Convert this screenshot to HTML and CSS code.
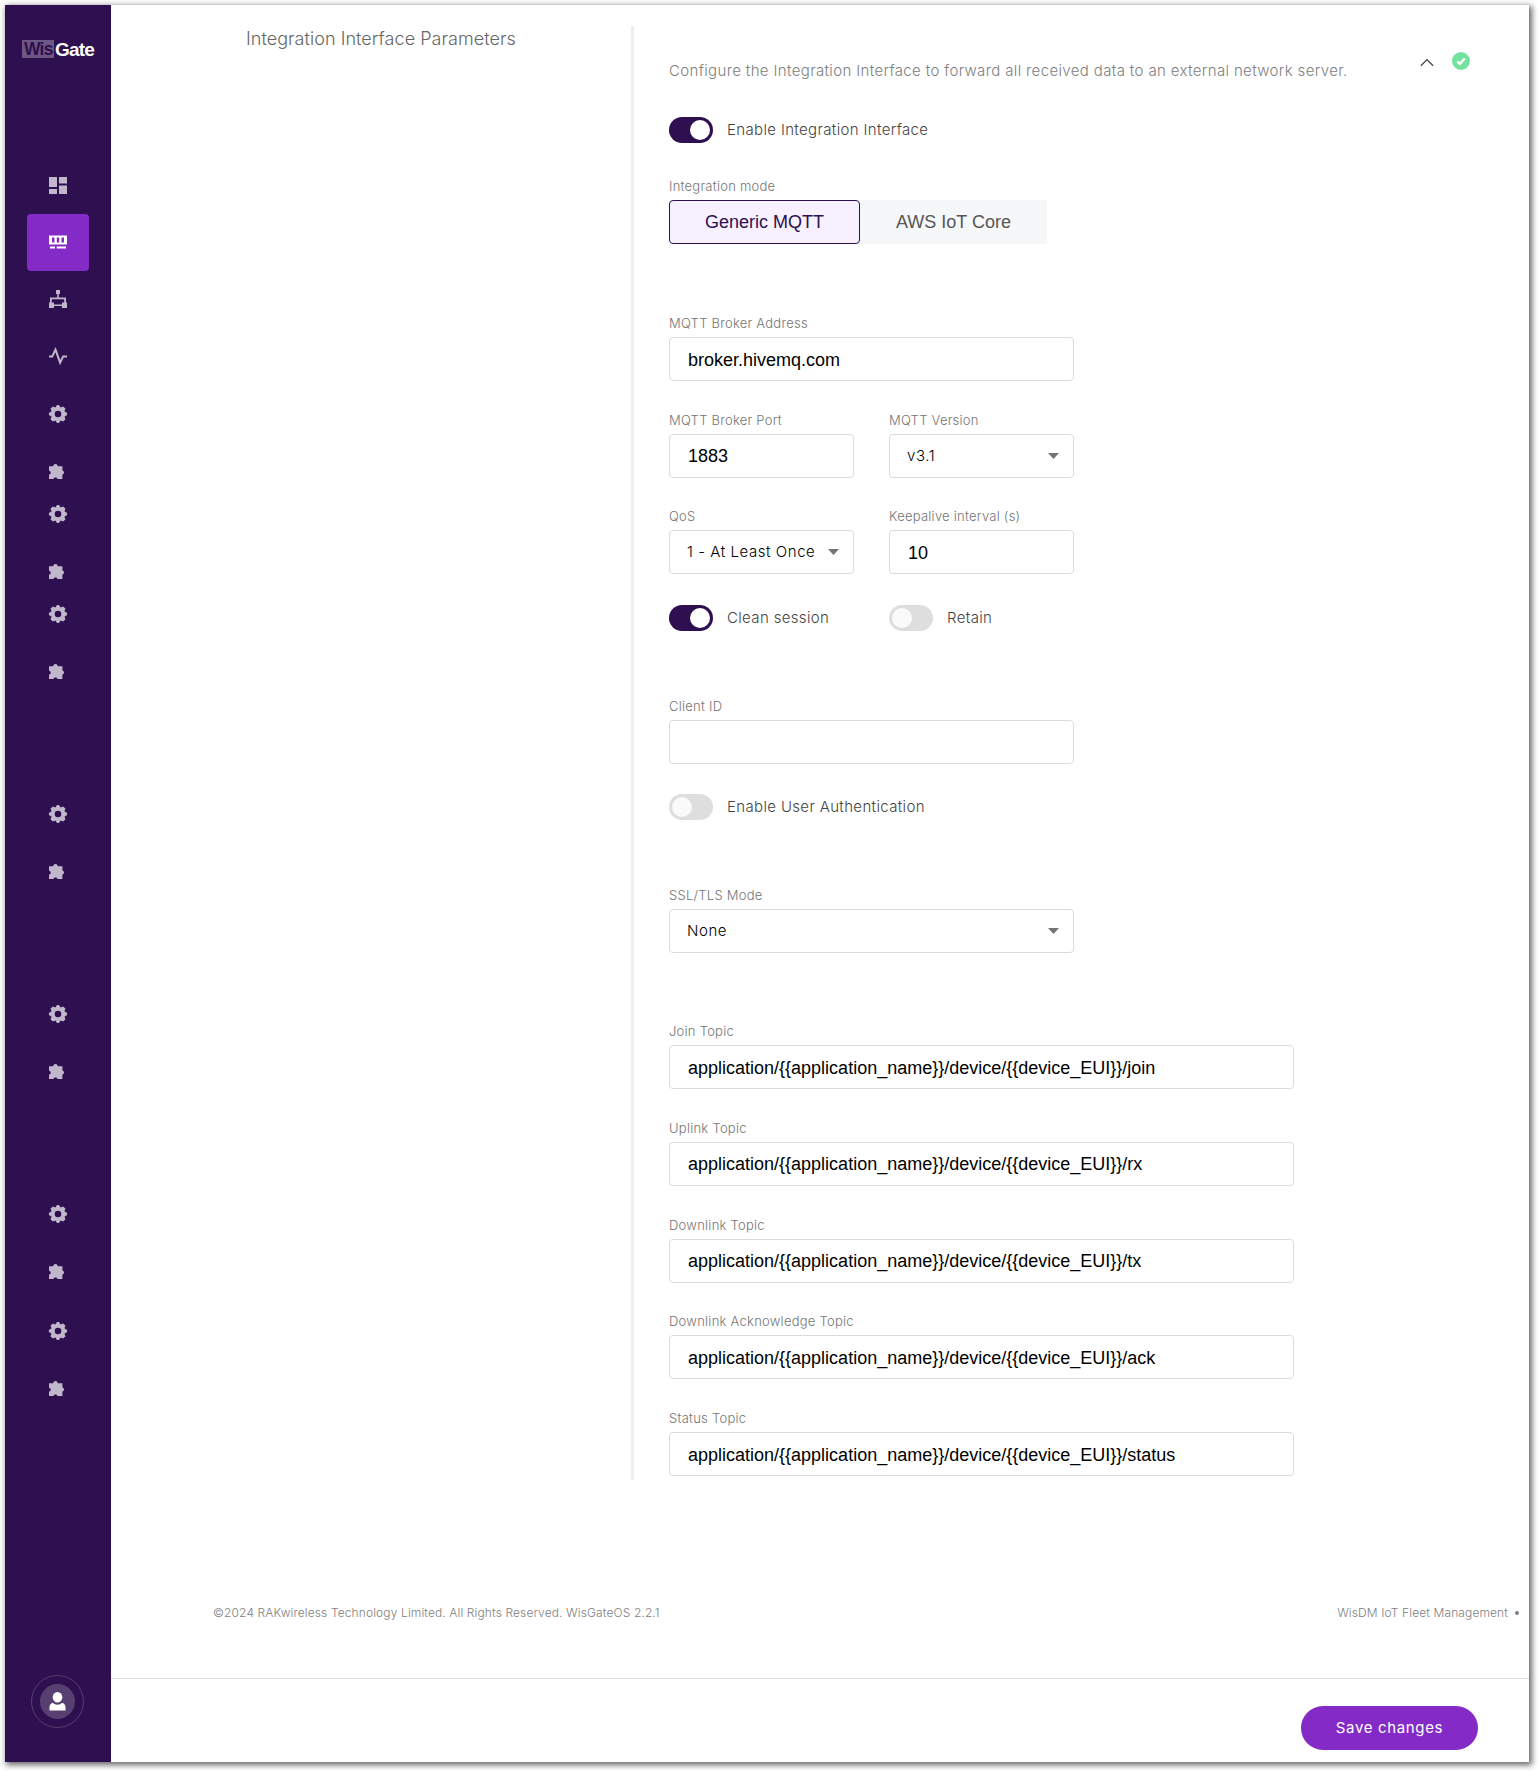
FILE: index.html
```html
<!DOCTYPE html>
<html lang="en">
<head>
<meta charset="utf-8">
<title>WisGate</title>
<link rel="stylesheet" href="styles.css">
</head>
<body>
<svg class="defs" width="0" height="0" aria-hidden="true">
  <symbol id="gear" viewBox="0 0 20 20"><path fill-rule="evenodd" d="M19.100 9v2l-2.700 1.650 1.150 2.550-2.350 2.350-2.550-1.150L11 19.100H9L7.350 16.400 4.800 17.550 2.450 15.200 3.600 12.650.9 11V9l2.700-1.650L2.450 4.800 4.800 2.450 7.350 3.600 9 .9h2l1.650 2.700 2.550-1.150 2.350 2.350-1.150 2.550zM10 6.700a3.300 3.300 0 1 0 0 6.600 3.300 3.300 0 0 0 0-6.600z"/></symbol>
  <symbol id="puzzle" viewBox="0 0 20 20"><path d="M1 4.200h4.300c0-1.500 1-2.200 2.200-2.200s2.200.7 2.200 2.200H14.400v4.300c1.100.2 1.600 1 1.600 1.900s-.5 1.800-1.600 2V17H9.400c-.2-.9-.9-1.400-1.900-1.400s-1.700.5-1.900 1.400H1v-4.400c1.100-.2 1.700-1 1.700-1.900S2.100 9 1 8.800z"/></symbol>
  <symbol id="caret" viewBox="0 0 11 6"><path d="M0 0h11L5.500 6z"/></symbol>
</svg>
<div class="window">
  <nav class="sidebar">
    <div class="logo"><span class="logo-wis">Wis</span><span class="logo-gate">Gate</span></div>
    <a class="nav-item"><svg width="20" height="20" viewBox="0 0 20 20"><path d="M1 1h8v10H1zM11 1h8v6.500h-8zM1 13h8v5H1zM11 9.500h8V18h-8z"/></svg></a>
    <a class="nav-item nav-item-active"><svg width="20" height="20" viewBox="0 0 20 20"><path fill-rule="evenodd" d="M1 3.500h18v9H1zM4 5.500v5h2.500v-5zM8.800 5.500v5h2.400v-5zM13.500 5.500v5H16v-5zM2 14.500h5v2H2zM8.700 14.500H18v2H8.700z"/></svg></a>
    <a class="nav-item nav-item-raised"><svg width="20" height="20" viewBox="0 0 20 20"><path d="M8 1h4v4h-1.200v3.500H18v5h1V19h-5v-5.500h2.200v-3.200H3.800v3.200H6V19H1v-5.500h1v-5h7.200V5H8z"/><path d="M6 15.500h8v1.500H6z"/></svg></a>
    <a class="nav-item nav-item-raised"><svg width="20" height="20" viewBox="0 0 20 20"><path class="stroke" d="M1 10.500h3.200L7.500 3.600l4.600 13 3-6.100H19"/></svg></a>
    <div class="nav-group"><svg><use href="#gear"/></svg><svg><use href="#puzzle"/></svg></div>
    <div class="nav-group"><svg><use href="#gear"/></svg><svg><use href="#puzzle"/></svg></div>
    <div class="nav-group"><svg><use href="#gear"/></svg><svg><use href="#puzzle"/></svg></div>
    <div class="nav-group nav-group-wide"><svg><use href="#gear"/></svg><svg><use href="#puzzle"/></svg></div>
    <div class="nav-group nav-group-wide"><svg><use href="#gear"/></svg><svg><use href="#puzzle"/></svg></div>
    <div class="nav-group nav-group-wide"><svg><use href="#gear"/></svg><svg><use href="#puzzle"/></svg></div>
    <div class="nav-group nav-group-mid"><svg><use href="#gear"/></svg><svg><use href="#puzzle"/></svg></div>
    <div class="avatar"><span class="avatar-inner"><svg width="17" height="19" viewBox="0 0 17 19"><ellipse cx="8.500" cy="5.300" rx="4.800" ry="5.200"/><path d="M.5 18.500v-3.300c0-2 1.200-3.700 3.200-4.500a6.800 6.800 0 0 0 9.600 0c2 .8 3.200 2.500 3.200 4.500v3.300z"/></svg></span></div>
  </nav>
  <main class="main">
    <div class="content">
      <h1 class="section-title">Integration Interface Parameters</h1>
      <section class="form">
        <header class="form-head">
          <p class="description">Configure the Integration Interface to forward all received data to an external network server.</p>
          <div class="status">
            <svg class="chevron" width="14" height="9" viewBox="0 0 14 9"><path d="M.9 7.800L7 1.600l6.100 6.200"/></svg>
            <svg width="18" height="18" viewBox="0 0 18 18"><circle cx="9" cy="9" r="9" fill="#73e29e"/><path d="M5.300 9.500l2.600 2.400 4.900-5.400" fill="none" stroke="#fff" stroke-width="2.400"/></svg>
          </div>
        </header>
        <div class="switch-row enable-row"><span class="switch switch-on"></span><span>Enable Integration Interface</span></div>
        <div class="field">
          <span class="label">Integration mode</span>
          <div class="segments"><button class="segment segment-active">Generic MQTT</button><button class="segment">AWS IoT Core</button></div>
        </div>
        <div class="field medium broker"><label class="label">MQTT Broker Address</label><input class="input" value="broker.hivemq.com"></div>
        <div class="pair port-row">
          <div class="field"><label class="label">MQTT Broker Port</label><input class="input" value="1883"></div>
          <div class="field"><span class="label">MQTT Version</span><div class="select"><span>v3.1</span><svg class="caret"><use href="#caret"/></svg></div></div>
        </div>
        <div class="pair qos-row">
          <div class="field"><span class="label">QoS</span><div class="select"><span>1 - At Least Once</span><svg class="caret"><use href="#caret"/></svg></div></div>
          <div class="field"><label class="label">Keepalive interval (s)</label><input class="input" value="10"></div>
        </div>
        <div class="pair session-row">
          <div class="switch-row"><span class="switch switch-on"></span><span>Clean session</span></div>
          <div class="switch-row"><span class="switch"></span><span>Retain</span></div>
        </div>
        <div class="field medium client"><label class="label">Client ID</label><input class="input" value=""></div>
        <div class="switch-row auth-row"><span class="switch"></span><span>Enable User Authentication</span></div>
        <div class="field medium client"><span class="label">SSL/TLS Mode</span><div class="select"><span>None</span><svg class="caret"><use href="#caret"/></svg></div></div>
        <div class="topics">
          <div class="field"><label class="label">Join Topic</label><input class="input" value="application/{{application_name}}/device/{{device_EUI}}/join"></div>
          <div class="field"><label class="label">Uplink Topic</label><input class="input" value="application/{{application_name}}/device/{{device_EUI}}/rx"></div>
          <div class="field"><label class="label">Downlink Topic</label><input class="input" value="application/{{application_name}}/device/{{device_EUI}}/tx"></div>
          <div class="field"><label class="label">Downlink Acknowledge Topic</label><input class="input" value="application/{{application_name}}/device/{{device_EUI}}/ack"></div>
          <div class="field"><label class="label">Status Topic</label><input class="input" value="application/{{application_name}}/device/{{device_EUI}}/status"></div>
        </div>
      </section>
    </div>
    <footer class="footer"><span>©2024 RAKwireless Technology Limited. All Rights Reserved. WisGateOS 2.2.1</span><span class="footer-link">WisDM IoT Fleet Management<i class="dot"></i></span></footer>
    <div class="actions"><button class="save">Save changes</button></div>
  </main>
</div>
</body>
</html>
```

FILE: styles.css
```css
* { box-sizing: border-box; }
body {
  margin: 0;
  padding: 5px;
  height: 1771px;
  overflow: hidden;
  background: #fff;
  font-family: Inter, "Liberation Sans", sans-serif;
}
.defs { position: absolute; }
.window {
  display: flex;
  width: 1524px;
  height: 1757px;
  background: #fff;
  box-shadow: 2px 2px 6px 1px rgba(0, 0, 0, .6);
}

/* Sidebar */
.sidebar {
  display: flex;
  flex-direction: column;
  align-items: center;
  flex: none;
  width: 106px;
  padding: 35px 0 34px;
  background: #2e0f4f;
  fill: #c0b7ca;
}
.logo {
  display: flex;
  align-items: center;
  gap: 1px;
  height: 18px;
  margin-bottom: 117px;
  padding-left: 1px;
  font: bold 17.5px/19px "Liberation Sans", sans-serif;
  letter-spacing: -.8px;
}
.logo-wis {
  width: 32px;
  height: 18px;
  padding-left: 2px;
  background: #6d5784;
  color: #2e0f4f;
}
.logo-gate {
  width: 40px;
  color: #fff;
  font-size: 19px;
}
.nav-item {
  display: flex;
  align-items: center;
  justify-content: center;
  flex: none;
  width: 62px;
  height: 57px;
  border-radius: 4px;
}
.nav-item:first-of-type { height: 39px; padding-bottom: 18px; }
.nav-item-active { padding-bottom: 1px; background: #842bc7; fill: #fff; }
.nav-item-raised { padding-bottom: 1px; }
.stroke { fill: none; stroke: #c0b7ca; stroke-width: 2; }
.nav-group {
  display: flex;
  flex-direction: column;
  gap: 38px;
  flex: none;
  margin-top: 22px;
}
.nav-item + .nav-group { margin-top: 19px; }
.nav-group svg { width: 20px; height: 20px; }
.nav-group-wide { margin-top: 122px; }
.nav-group-mid { margin-top: 39px; }
.avatar {
  display: flex;
  align-items: center;
  justify-content: center;
  flex: none;
  width: 53px;
  height: 53px;
  margin: auto 1px 0 0;
  border: 1px solid #58406f;
  border-radius: 50%;
}
.avatar-inner {
  display: flex;
  align-items: center;
  justify-content: center;
  width: 35px;
  height: 35px;
  border-radius: 50%;
  background: #583f72;
  fill: #fff;
}

/* Main column */
.main {
  display: flex;
  flex-direction: column;
  flex: 1;
  min-width: 0;
}
.content {
  display: flex;
  height: 1475px;
  padding: 21px 59px 0 135px;
}
.section-title {
  width: 385px;
  margin: 0;
  color: #666;
  font-size: 18px;
  font-weight: 300;
  line-height: 26px;
  letter-spacing: .05px;
}
.form {
  flex: 1;
  border-left: 3px solid #eee;
  padding: 0 0 4px 35px;
}
.form-head {
  display: flex;
  justify-content: space-between;
  height: 57px;
  padding-top: 26px;
}
.description {
  margin: 7px 0 0;
  color: #808080;
  font-size: 15px;
  font-weight: 300;
  line-height: 24px;
  letter-spacing: .36px;
  white-space: nowrap;
}
.status {
  display: flex;
  align-items: flex-start;
  gap: 18px;
}
.chevron {
  margin-top: 6px;
  fill: none;
  stroke: #444;
  stroke-width: 1.300;
}

/* Fields */
.label {
  display: block;
  height: 24px;
  color: #757575;
  font-size: 13px;
  font-weight: 300;
  line-height: 21px;
  letter-spacing: .25px;
  white-space: nowrap;
}
.input, .select {
  display: flex;
  align-items: center;
  width: 100%;
  height: 44px;
  margin: 0;
  border: 1px solid #dcdcdc;
  border-radius: 4px;
  background: #fff;
  color: #000;
}
.input {
  padding: 2px 18px 0;
  outline: 0;
  font: 18px "Liberation Sans", Arial, sans-serif;
}
.port-row .input { padding-top: 0; }
.select {
  justify-content: space-between;
  padding: 0 14px 0 17px;
  font-size: 15px;
  font-weight: 300;
  line-height: 24px;
  letter-spacing: .55px;
  white-space: nowrap;
}
.caret { flex: none; width: 11px; height: 6px; fill: #757575; }
.segments { display: flex; height: 44px; }
.segment {
  width: 187px;
  padding: 0;
  border: 0;
  background: #f6f7f9;
  color: #555;
  font: 18px "Liberation Sans", Arial, sans-serif;
}
.segment-active {
  width: 191px;
  border: 1px solid #2e0f4f;
  border-radius: 4px;
  background: #f6f0ff;
  color: #2e0f4f;
}
.switch-row {
  display: flex;
  align-items: center;
  gap: 14px;
  height: 26px;
  color: #444;
  font-size: 15px;
  font-weight: 300;
  line-height: 24px;
  letter-spacing: .35px;
}
.switch {
  display: flex;
  width: 44px;
  height: 26px;
  padding: 3px;
  border-radius: 13px;
  background: #dedede;
}
.switch::before {
  content: "";
  width: 20px;
  height: 20px;
  border-radius: 50%;
  background: #fafafa;
}
.switch-on { justify-content: flex-end; background: #2e0f4f; }
.switch-on::before { background: #fff; }
.enable-row { margin: 34px 0 33px; }
.medium { width: 405px; }
.pair {
  display: grid;
  grid-template-columns: 185px 185px;
  column-gap: 35px;
}
.broker { margin-top: 69px; }
.port-row { margin-top: 29px; }
.qos-row { margin-top: 28px; }
.session-row { margin-top: 31px; }
.client { margin-top: 65px; }
.auth-row { margin-top: 30px; }
.topics {
  display: flex;
  flex-direction: column;
  gap: 28.750px;
  width: 625px;
  margin-top: 68px;
}

/* Footer */
.footer {
  display: flex;
  justify-content: space-between;
  height: 198px;
  padding: 123px 10px 0 102px;
  color: #808080;
  font-size: 12px;
  font-weight: 300;
  line-height: 20px;
  letter-spacing: .12px;
}
.footer-link { display: flex; align-items: center; height: 20px; }
.dot {
  width: 4px;
  height: 4px;
  margin-left: 7px;
  border-radius: 50%;
  background: #808080;
}
.actions {
  display: flex;
  justify-content: flex-end;
  flex: 1;
  padding: 27px 51px 0 0;
  border-top: 1px solid #dcdcdc;
}
.save {
  width: 177px;
  height: 44px;
  padding: 0 0 2px;
  border: 0;
  border-radius: 22px;
  background: #842bc7;
  color: #fff;
  font: 400 15px Inter, sans-serif;
  letter-spacing: .65px;
}
```
